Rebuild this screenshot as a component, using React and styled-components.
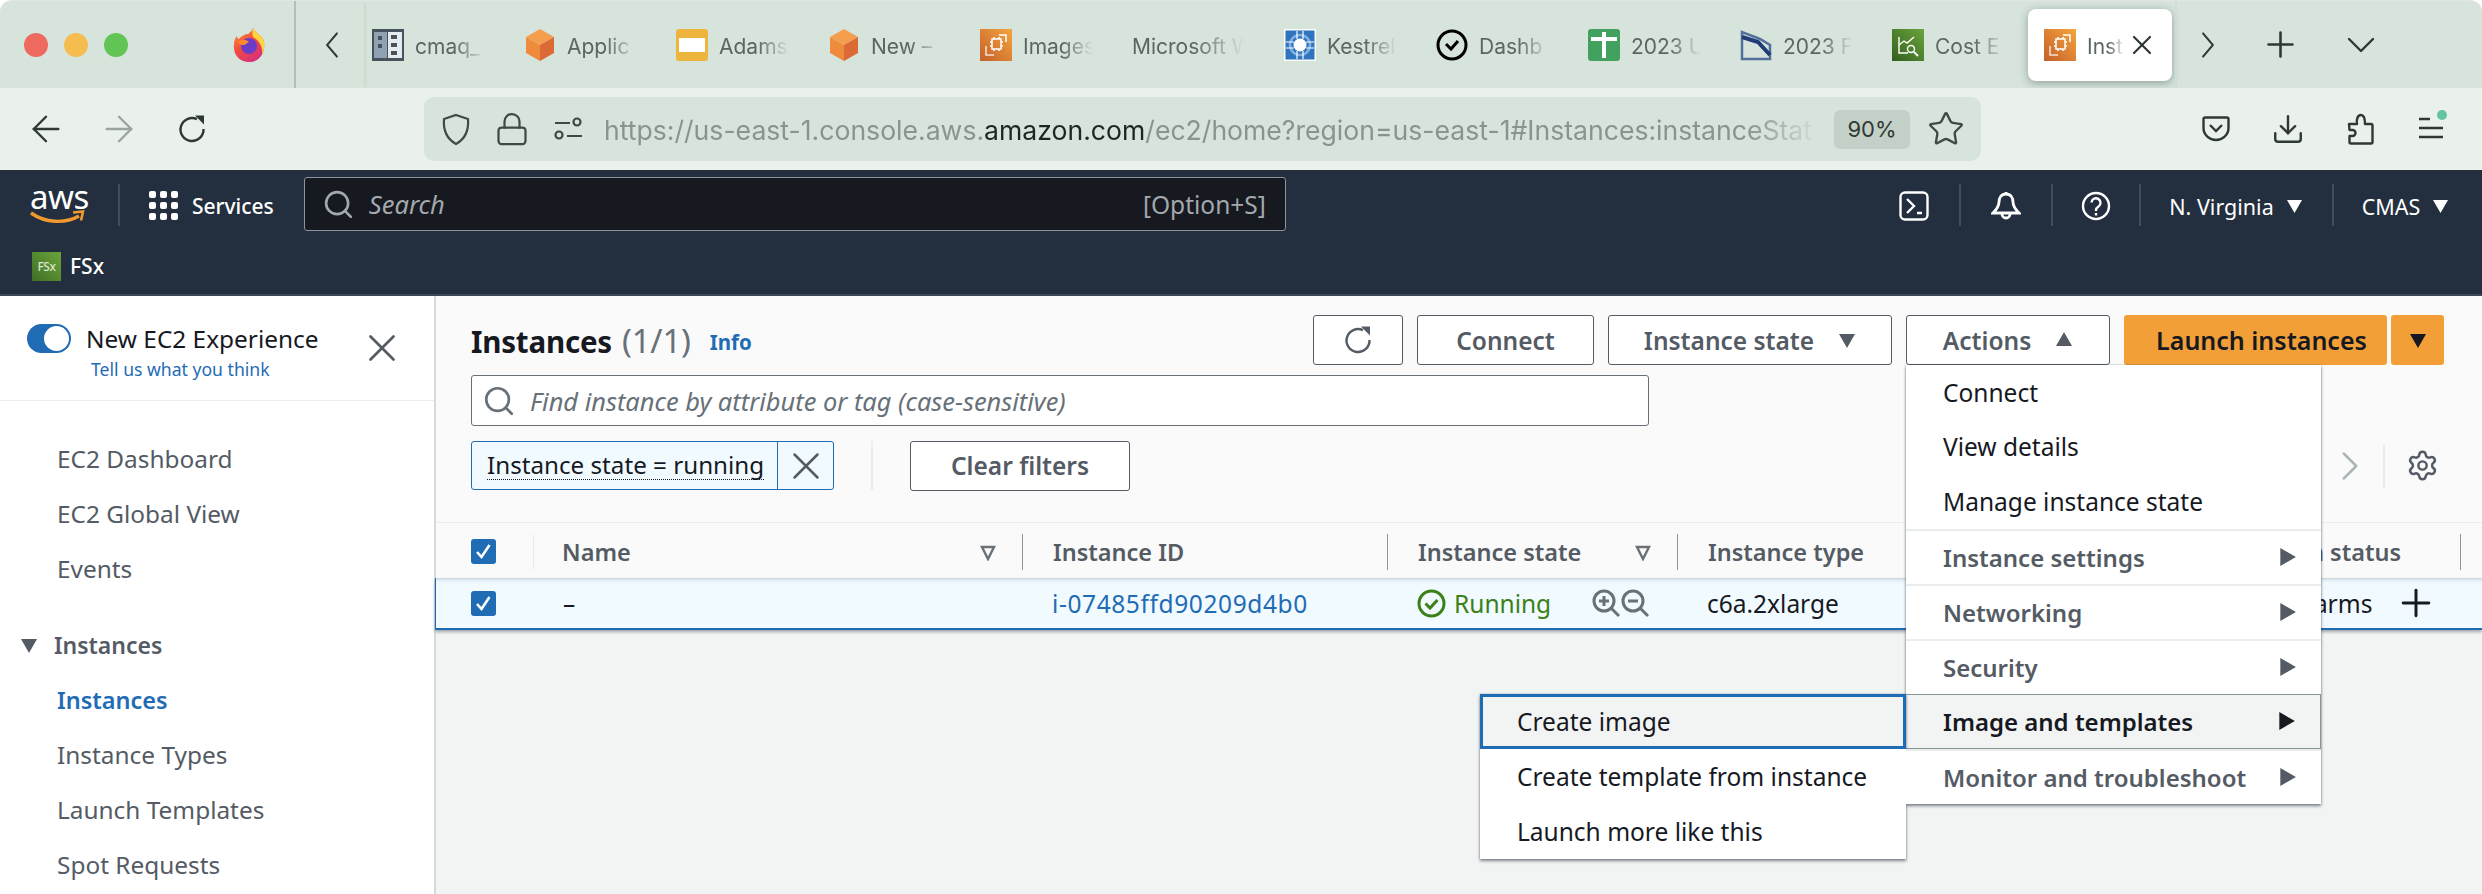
import styled, { createGlobalStyle } from 'styled-components';
import { ArrowLeft, ArrowRight, ChevronDown, ChevronLeft, ChevronRight, Download, Lock, Plus, Search, Settings, Star, X } from 'lucide-react';

const GlobalStyle = createGlobalStyle`
    html, body {
        margin: 0;
        background: #fff;
        font-family: "Noto Sans", "Open Sans", sans-serif;
    }
`;

const columns = '97px 489px 365px 290px 547px 236px 22px';
const blue = '#1f6cb5';

const Window = styled.div`
    width: 2482px;
    height: 894px;
    display: flex;
    flex-direction: column;
    overflow: hidden;
`;

const TabBar = styled.div`
    height: 88px;
    flex: none;
    display: flex;
    align-items: center;
    background: #d6e4db;
    border-radius: 12px 12px 0 0;
    border-top: 1px solid #e2e6e3;
    box-sizing: border-box;
    font-family: Inter, sans-serif;
`;

const Lights = styled.div`
    width: 296px;
    height: 100%;
    flex: none;
    box-sizing: border-box;
    padding: 0 29px 0 24px;
    display: flex;
    align-items: center;
    gap: 16px;
    border-right: 2px solid #b3c0b7;
`;

const Light = styled.span`
    width: 24px;
    height: 24px;
    border-radius: 50%;
    background: ${({ $color }) => $color};
`;

const BackCell = styled.div`
    width: 68px;
    height: 100%;
    flex: none;
    box-sizing: border-box;
    padding-left: 3px;
    display: flex;
    align-items: center;
    justify-content: center;
    color: #2f3833;
    box-shadow: 3px 0 3px -2px #c3d0c7;
`;

const Tab = styled.div`
    flex: none;
    width: 152px;
    box-sizing: border-box;
    padding-left: 8px;
    display: flex;
    align-items: center;
    gap: 11px;
`;

const TabLabel = styled.span`
    width: ${({ $w }) => $w || 70}px;
    padding-top: 4px;
    overflow: hidden;
    white-space: nowrap;
    font-size: 21px;
    color: #5c6660;
    -webkit-mask-image: linear-gradient(to right, #000 55%, transparent 100%);
    mask-image: linear-gradient(to right, #000 55%, transparent 100%);
`;

const ActiveTab = styled.div`
    flex: none;
    width: 144px;
    height: 72px;
    margin-left: -8px;
    box-sizing: border-box;
    padding-left: 16px;
    display: flex;
    align-items: center;
    gap: 11px;
    background: #fff;
    border-radius: 8px;
    box-shadow: 0 2px 8px rgba(60, 80, 70, 0.45);
    color: #2f3833;
`;

const ActiveLabel = styled(TabLabel)`
    width: 38px;
    color: #5c6660;
    flex: none;
`;

const TabTools = styled.div`
    display: flex;
    align-items: center;
    color: #2f3833;
    margin-left: 3px;
    border-left: 2px solid #d0ddd4;
    height: 100%;
`;

const ToolCell = styled.div`
    width: ${({ $w }) => $w}px;
    display: flex;
    justify-content: center;
`;

const ToolBar = styled.div`
    height: 82px;
    flex: none;
    display: flex;
    align-items: center;
    padding: 0 14px 0 9px;
    background: #e9f1ea;
    color: #2f3833;
    font-family: Inter, sans-serif;
`;

const NavButton = styled.div`
    width: 73px;
    display: flex;
    justify-content: center;
    color: ${({ $muted }) => ($muted ? '#9aa59e' : '#2f3833')};
`;

const UrlBar = styled.div`
    width: 1557px;
    height: 64px;
    margin-left: 196px;
    flex: none;
    box-sizing: border-box;
    padding-left: 4px;
    display: flex;
    align-items: center;
    background: #d6e4db;
    border-radius: 10px;
`;

const UrlIcon = styled.div`
    width: 56px;
    flex: none;
    display: flex;
    justify-content: center;
`;

const UrlText = styled.div`
    flex: 1;
    min-width: 0;
    margin-left: 8px;
    padding-top: 2px;
    overflow: hidden;
    white-space: nowrap;
    font-size: 26.6px;
    color: #89948e;
    -webkit-mask-image: linear-gradient(to right, #000 94%, transparent 100%);
    mask-image: linear-gradient(to right, #000 94%, transparent 100%);

    b {
        font-weight: 400;
        color: #1f2522;
    }
`;

const ZoomBadge = styled.div`
    width: 76px;
    height: 39px;
    margin-left: 14px;
    flex: none;
    display: flex;
    align-items: center;
    justify-content: center;
    background: #c3d0c7;
    border-radius: 6px;
    font-size: 22px;
    color: #2f3833;
`;

const StarCell = styled.div`
    width: 71px;
    flex: none;
    display: flex;
    justify-content: center;
`;

const ToolRight = styled.div`
    margin-left: auto;
    display: flex;
    align-items: center;
`;

const ToolIcon = styled.div`
    width: 72px;
    display: flex;
    align-items: center;
    justify-content: center;
`;

const TopNav = styled.div`
    height: 126px;
    flex: none;
    box-sizing: border-box;
    background: #232f3e;
    border-bottom: 2px solid #3b4757;
    color: #fff;
`;

const NavRow = styled.div`
    height: 68px;
    box-sizing: border-box;
    padding: 4px 0 0 30px;
    display: flex;
    align-items: center;
`;

const Logo = styled.div`
    width: 56px;
    height: 44px;
    flex: none;
    margin-top: -4px;
    position: relative;
    font-size: 33px;
    line-height: 30px;
    letter-spacing: -0.5px;
    text-align: center;

    svg {
        position: absolute;
        left: 0;
        bottom: 0;
    }
`;

const NavDivider = styled.span`
    width: 2px;
    height: 42px;
    flex: none;
    background: #414d5c;
    margin-top: -2px;
    margin-left: ${({ $ml }) => $ml || 0}px;
`;

const GridDots = styled.div`
    margin: -2px 0 0 29px;
    display: grid;
    grid-template-columns: repeat(3, 7px);
    grid-auto-rows: 7px;
    gap: 4px;
    flex: none;

    span {
        background: #fff;
        border-radius: 2px;
        width: 7px;
        height: 7px;
    }
`;

const ServicesLabel = styled.span`
    margin-left: 14px;
    font-size: 21px;
    font-weight: 500;
`;

const SearchBox = styled.div`
    width: 982px;
    height: 54px;
    margin: -4px 0 0 30px;
    box-sizing: border-box;
    padding: 0 19px 0 17px;
    flex: none;
    display: flex;
    align-items: center;
    background: #16191f;
    border: 1px solid #8d9399;
    border-radius: 3px;
    color: #a3a8ad;
    font-size: 24.5px;

    i {
        margin-left: 14px;
        font-size: 25.5px;
    }
    span {
        margin-left: auto;
    }
`;

const NavRight = styled.div`
    margin-left: auto;
    display: flex;
    align-items: center;
    height: 100%;
`;

const NavCell = styled.div`
    width: ${({ $w }) => $w}px;
    box-sizing: border-box;
    padding-right: ${({ $pr }) => $pr || 0}px;
    display: flex;
    align-items: center;
    justify-content: center;
    gap: 13px;
    font-size: 21.5px;
`;

const WhiteCaret = styled.svg`
    width: 15px;
    height: 13px;
    fill: currentColor;
`;

const SubRow = styled.div`
    height: 56px;
    display: flex;
    align-items: center;
    padding: 0 0 3px 32px;
    gap: 9px;
    font-size: 21px;
    font-weight: 500;
`;

const FsxIcon = styled.div`
    width: 29px;
    height: 29px;
    display: flex;
    align-items: center;
    justify-content: center;
    background: linear-gradient(45deg, #3f6f25, #6ba43c);
    font-size: 12px;
    letter-spacing: -0.5px;
    color: #d8e6cf;
`;

const Body = styled.div`
    flex: 1;
    min-height: 0;
    display: flex;
`;

const Sidebar = styled.div`
    width: 436px;
    flex: none;
    box-sizing: border-box;
    border-right: 2px solid #d5dbdb;
    background: #fff;
    overflow: hidden;
`;

const Promo = styled.div`
    height: 105px;
    box-sizing: border-box;
    padding: 28px 29px 0 27px;
    display: flex;
    border-bottom: 1px solid #eaeded;
`;

const PromoRow = styled.div`
    display: flex;
    align-items: center;
    gap: 15px;
    font-size: 24.4px;
    line-height: 29px;
    color: #16191f;
`;

const Toggle = styled.span`
    width: 44px;
    height: 29px;
    flex: none;
    box-sizing: border-box;
    display: flex;
    justify-content: flex-end;
    align-items: center;
    padding-right: 2px;
    background: ${blue};
    border-radius: 15px;

    &::after {
        content: '';
        width: 25px;
        height: 25px;
        border-radius: 50%;
        background: #fff;
    }
`;

const PromoLink = styled.div`
    margin: 4px 0 0 64px;
    font-size: 17.6px;
    line-height: 24px;
    color: ${blue};
`;

const PromoClose = styled.div`
    margin-left: auto;
    padding-top: 1px;
    color: #545b64;
`;

const SideList = styled.div`
    padding-top: 30px;
`;

const SideLink = styled.div`
    height: 55px;
    display: flex;
    align-items: center;
    padding-left: 57px;
    font-size: ${({ $active }) => ($active ? 23.5 : 24.4)}px;
    font-weight: ${({ $active }) => ($active ? 600 : 400)};
    color: ${({ $active }) => ($active ? blue : '#545b64')};
`;

const SideSection = styled.div`
    height: 55px;
    margin-top: 21px;
    display: flex;
    align-items: center;
    padding-left: 20px;
    gap: 16px;
    font-size: 23px;
    font-weight: 600;
    color: #545b64;
`;

const Caret = styled.svg`
    width: ${({ $size }) => $size || 18}px;
    height: ${({ $size }) => $size || 18}px;
    flex: none;
    fill: ${({ $color }) => $color || 'currentColor'};
    transform: rotate(${({ $deg }) => $deg || 0}deg);
`;

const Content = styled.div`
    flex: 1;
    min-width: 0;
    background: #f2f3f3;
`;

const Header = styled.div`
    height: 227px;
    box-sizing: border-box;
    padding: 19px 38px 0 35px;
    background: #fafafa;
    border-bottom: 1px solid #eaeded;
`;

const TitleRow = styled.div`
    display: flex;
    align-items: center;
    height: 50px;
`;

const Title = styled.h1`
    margin: 0;
    font-size: 29.5px;
    font-weight: 700;
    color: #16191f;
    letter-spacing: -0.2px;

    span {
        margin-left: 10px;
        font-size: 33px;
        font-weight: 400;
        color: #687078;
    }
`;

const InfoLink = styled.span`
    margin: 4px 0 0 19px;
    font-size: 20.5px;
    font-weight: 700;
    color: ${blue};
`;

const Buttons = styled.div`
    margin-left: auto;
    display: flex;
    align-items: center;
    gap: 14px;
`;

const Button = styled.div`
    width: ${({ $w }) => $w}px;
    height: 50px;
    box-sizing: border-box;
    display: flex;
    align-items: center;
    justify-content: center;
    gap: ${({ $gap }) => $gap || 0}px;
    background: #fff;
    border: 1px solid #545b64;
    border-radius: 3px;
    font-size: 24.5px;
    font-weight: 600;
    color: #545b64;
`;

const ActionsWrap = styled.div`
    position: relative;
`;

const LaunchGroup = styled.div`
    display: flex;
    gap: 4px;
`;

const LaunchButton = styled(Button)`
    background: #f29f38;
    border: none;
    color: #16191f;
    padding-left: ${({ $pl }) => $pl || 0}px;
    font-size: 25px;
`;

const SearchRow = styled.div`
    width: 1178px;
    height: 51px;
    margin-top: 10px;
    box-sizing: border-box;
    padding-left: 10px;
    display: flex;
    align-items: center;
    gap: 14px;
    background: #fff;
    border: 1px solid #687078;
    border-radius: 3px;
    color: #687078;
    font-size: 25.4px;
    font-style: italic;
`;

const FilterRow = styled.div`
    height: 49px;
    margin-top: 15px;
    display: flex;
    align-items: center;
`;

const Token = styled.div`
    width: 363px;
    height: 49px;
    flex: none;
    box-sizing: border-box;
    display: flex;
    background: #f1faff;
    border: 1px solid ${blue};
    border-radius: 3px;
    color: #16191f;
`;

const TokenText = styled.div`
    flex: 1;
    display: flex;
    align-items: center;
    padding-left: 15px;
    font-size: 24.2px;

    span {
        line-height: 28px;
        border-bottom: 1px dotted #16191f;
        white-space: nowrap;
    }
`;

const TokenClose = styled.div`
    width: 55px;
    flex: none;
    display: flex;
    align-items: center;
    justify-content: center;
    border-left: 1px solid ${blue};
    color: #545b64;
`;

const FilterSep = styled.span`
    width: 2px;
    height: 49px;
    margin: 0 37px;
    flex: none;
    background: #eaeded;
`;

const Pager = styled.div`
    margin-left: auto;
    padding-right: 5px;
    display: flex;
    align-items: center;
    color: #aab7b8;
`;

const PagerSep = styled.span`
    width: 2px;
    height: 44px;
    margin: 0 21px 0 8px;
    background: #eaeded;
`;

const GearWrap = styled.span`
    display: flex;
    color: #545b64;
`;

const TableHead = styled.div`
    height: 55px;
    box-sizing: border-box;
    padding-top: 2px;
    display: grid;
    grid-template-columns: ${columns};
    align-items: center;
    background: #fafafa;
`;

const HeadCell = styled.div`
    height: 36px;
    box-sizing: border-box;
    padding: 0 25px 0 ${({ $faint }) => ($faint ? 28 : 30)}px;
    display: flex;
    align-items: center;
    justify-content: space-between;
    border-left: ${({ $faint }) => ($faint ? '1px solid #eaeded' : '1px solid #8d949b')};
    font-size: 23.5px;
    font-weight: 600;
    color: #545b64;
    white-space: nowrap;
`;

const CheckCell = styled.div`
    padding-left: 35px;
    display: flex;
    align-items: center;
`;

const Check = styled.span`
    width: 25px;
    height: 25px;
    display: flex;
    align-items: center;
    justify-content: center;
    background: ${blue};
    border-radius: 3px;
`;

const TableRow = styled.div`
    height: 52px;
    box-sizing: border-box;
    display: grid;
    grid-template-columns: ${columns};
    align-items: center;
    background: #f1faff;
    border-left: 1px solid ${blue};
    border-bottom: 2px solid ${blue};
    margin-left: -1px;
    box-shadow: 0 2px 3px rgba(60, 70, 80, 0.45), inset 0 5px 4px -4px rgba(60, 70, 80, 0.3);
`;

const RowCell = styled.div`
    padding-left: 30px;
    display: flex;
    align-items: center;
    font-size: 24.5px;
    letter-spacing: ${({ $wide }) => ($wide ? '0.6px' : 'normal')};
    color: ${({ $color }) => $color || '#16191f'};
    white-space: nowrap;
`;

const StateText = styled.span`
    margin-left: 8px;
    color: #3b8019;
`;

const ZoomIcons = styled.span`
    margin-left: 41px;
    display: flex;
    color: #687078;
`;

const Menu = styled.div`
    position: absolute;
    top: 100%;
    left: 0;
    z-index: 3;
    width: 415px;
    background: #fff;
    box-shadow: 0 2px 3px rgba(40, 50, 60, 0.55), 0 0 2px rgba(40, 50, 60, 0.3);
`;

const MenuItem = styled.div`
    position: relative;
    height: 54.6px;
    box-sizing: border-box;
    padding: 0 24px 0 37px;
    display: flex;
    align-items: center;
    justify-content: space-between;
    font-size: 24.5px;
    color: #16191f;
    white-space: nowrap;
`;

const MenuGroup = styled(MenuItem)`
    height: 55px;
    font-size: 24px;
    font-weight: 600;
    color: ${({ $open }) => ($open ? '#16191f' : '#545b64')};
    background: ${({ $open }) => ($open ? '#f2f3f3' : '#fff')};
    border-top: ${({ $open }) => ($open ? '1px solid #879596' : '2px solid #eaeded')};
    border-bottom: ${({ $open }) => ($open ? '1px solid #879596' : 'none')};
    border-right: ${({ $open }) => ($open ? '1px solid #879596' : 'none')};
`;

const SubMenu = styled.div`
    position: absolute;
    top: -1px;
    right: 100%;
    width: 426px;
    background: #fff;
    box-shadow: 0 2px 3px rgba(40, 50, 60, 0.55), 0 0 2px rgba(40, 50, 60, 0.3);
    font-weight: 400;
    color: #16191f;
`;

const SubItem = styled(MenuItem)`
    height: 55px;
    background: ${({ $focus }) => ($focus ? '#f2f3f3' : '#fff')};
    border: ${({ $focus }) => ($focus ? `3px solid ${blue}` : 'none')};
    padding-left: ${({ $focus }) => ($focus ? 34 : 37)}px;
`;

// tab favicons
const CubeIcon = () => (
    <svg width="32" height="32" viewBox="0 0 32 32">
        <polygon points="16,0 30,8 16,16 2,8" fill="#f59e4d" />
        <polygon points="2,8 16,16 16,32 2,24" fill="#ef8c3b" />
        <polygon points="30,8 16,16 16,32 30,24" fill="#dc6a34" />
    </svg>
);

const ChipIcon = () => (
    <svg width="32" height="32" viewBox="0 0 32 32">
        <defs>
            <linearGradient id="chipGrad" x1="0" y1="1" x2="1" y2="0">
                <stop offset="0" stopColor="#c5602a" />
                <stop offset="1" stopColor="#f4a53e" />
            </linearGradient>
        </defs>
        <rect width="32" height="32" fill="url(#chipGrad)" />
        <g fill="none" stroke="#fff" strokeWidth="1.5">
            <rect x="12" y="10" width="9" height="10" />
            <path d="M14 8v2M19 8v2M14 20v2M19 20v2M10 13h2M10 17h2M21 13h2M21 17h2" />
            <path d="M19 6h7v7" />
            <path d="M6 17v9h8" opacity="0.8" />
        </g>
    </svg>
);

const TabIcons = {
    cmaq: () => (
        <svg width="32" height="32" viewBox="0 0 32 32">
            <rect width="32" height="32" fill="#47535c" />
            <rect x="2" y="3" width="13" height="26" fill="#8fa2b3" />
            <rect x="16" y="3" width="14" height="26" fill="#e5eaee" />
            <path d="M6 7h4v4H6zM6 15h4v4H6zM19 6h6v4h-6zM19 14h6v4h-6zM19 22h6v4h-6z" fill="#47535c" />
        </svg>
    ),
    cube: CubeIcon,
    slides: () => (
        <svg width="32" height="32" viewBox="0 0 32 32">
            <rect width="32" height="32" rx="3" fill="#edb53e" />
            <rect x="3" y="9" width="26" height="14" fill="#fff" />
        </svg>
    ),
    chip: ChipIcon,
    kestrel: () => (
        <svg width="32" height="32" viewBox="0 0 32 32">
            <rect width="32" height="32" fill="#fff" />
            <rect x="1.5" y="1.5" width="29" height="29" fill="#2f74bf" />
            <circle cx="16" cy="16" r="10" fill="none" stroke="#7fb0e0" strokeWidth="2.5" />
            <circle cx="16" cy="16" r="6.5" fill="#fff" />
            <path d="M2 13h8M2 19h8M22 13h8M22 19h8M13 2v8M19 2v8M13 22v8M19 22v8" stroke="#fff" strokeWidth="1.2" />
        </svg>
    ),
    dash: () => (
        <svg width="32" height="32" viewBox="0 0 32 32">
            <circle cx="16" cy="16" r="14" fill="none" stroke="#000" strokeWidth="3" />
            <path d="M10 15l5 5 7-8" fill="none" stroke="#000" strokeWidth="3" />
        </svg>
    ),
    sheet: () => (
        <svg width="32" height="32" viewBox="0 0 32 32">
            <rect width="32" height="32" rx="3" fill="#43a160" />
            <path d="M3 10h26M16 3v26" stroke="#fff" strokeWidth="4" />
        </svg>
    ),
    report: () => (
        <svg width="32" height="32" viewBox="0 0 32 32">
            <path d="M2 3v27h28V16L20 10z" fill="none" stroke="#54709a" strokeWidth="2.5" />
            <path d="M2 8l16 5 12 13" fill="none" stroke="#1f3c78" strokeWidth="4" />
        </svg>
    ),
    cost: () => (
        <svg width="32" height="32" viewBox="0 0 32 32">
            <defs>
                <linearGradient id="costGrad" x1="0" y1="1" x2="1" y2="0">
                    <stop offset="0" stopColor="#325f1f" />
                    <stop offset="1" stopColor="#6ba43c" />
                </linearGradient>
            </defs>
            <rect width="32" height="32" fill="url(#costGrad)" />
            <g fill="none" stroke="#fff" strokeWidth="1.4">
                <path d="M7 8v16h9" />
                <path d="M7 16l5-4 3 2 7-6" />
                <circle cx="19" cy="20" r="3.5" />
                <path d="M22 23l4 4" strokeWidth="2" />
            </g>
        </svg>
    ),
};

const tabs = [
    { icon: 'cmaq', label: 'cmaq_' },
    { icon: 'cube', label: 'Applic' },
    { icon: 'slides', label: 'Adams' },
    { icon: 'cube', label: 'New –' },
    { icon: 'chip', label: 'Images' },
    { label: 'Microsoft W', width: 112 },
    { icon: 'kestrel', label: 'Kestrel' },
    { icon: 'dash', label: 'Dashb' },
    { icon: 'sheet', label: '2023 U' },
    { icon: 'report', label: '2023 F' },
    { icon: 'cost', label: 'Cost E' },
];

const FirefoxIcon = () => (
    <svg width="32" height="34" viewBox="0 0 32 34" style={{ marginLeft: 'auto' }}>
        <defs>
            <linearGradient id="foxBody" x1="0" y1="0" x2="0.6" y2="1">
                <stop offset="0" stopColor="#ff9a2e" />
                <stop offset="0.55" stopColor="#f2493f" />
                <stop offset="1" stopColor="#d8327a" />
            </linearGradient>
        </defs>
        <path d="M20 0c1 4 7 6 10 11 3 6 1 23-14 23C6 34 0 26 1 17c0-5 2-8 3-9 0 2 1 3 2 3 2-3 6-5 9-5 2-2 4-3 5-6z" fill="url(#foxBody)" />
        <path d="M20 0c1 4 7 6 10 11 2 4 2 10-1 15 1-7-3-14-9-17-1-3-1-6 0-9z" fill="#ffd53d" />
        <circle cx="16" cy="18" r="8" fill="#6a3cc8" />
        <path d="M5 14c3-3 8-3 11 0-3 1-3 3-6 3s-4-1-5-3z" fill="#ff8a2b" />
    </svg>
);

const ReloadIcon = ({ size = 28 }) => (
    <svg width={size} height={size} viewBox="0 0 28 28" fill="none" stroke="currentColor" strokeWidth="2.4">
        <path d="M19 4.2A11.5 11.5 0 1 0 25.5 14" />
        <path d="M17 0.5h9v9z" fill="currentColor" stroke="none" />
    </svg>
);

const ShieldIcon = () => (
    <svg width="30" height="33" viewBox="0 0 30 33" fill="none" stroke="#3f4a44" strokeWidth="2.2">
        <path d="M15 2l12 4c1 12-3 20-12 25C6 26 2 18 3 6z" />
    </svg>
);

const PermIcon = () => (
    <svg width="28" height="24" viewBox="0 0 28 24" fill="none" stroke="#3f4a44" strokeWidth="2.2">
        <path d="M1 6h15M13 19h15" />
        <circle cx="23" cy="5" r="3.5" />
        <circle cx="5" cy="18" r="3.5" />
    </svg>
);

const PocketIcon = () => (
    <svg width="28" height="26" viewBox="0 0 28 26" fill="none" stroke="currentColor" strokeWidth="2.4">
        <path d="M3 1.5h22a1.5 1.5 0 0 1 1.5 1.5v9c0 7-6 12-12.5 12S1.5 19 1.5 12V3A1.5 1.5 0 0 1 3 1.5z" />
        <path d="M8 9l6 6 6-6" />
    </svg>
);

const PuzzleIcon = () => (
    <svg width="27" height="32" viewBox="0 0 27 32" fill="none" stroke="currentColor" strokeWidth="2.4" strokeLinejoin="round">
        <path d="M2 11h8c-1-5 1-9 4-9s4 4 4 9h6a1.5 1.5 0 0 1 1.5 1.5V29a1.5 1.5 0 0 1-1.5 1.5H4A1.5 1.5 0 0 1 2.5 29v-6h3a3 3 0 0 0 0-6h-3z" />
    </svg>
);

const MenuIcon = () => (
    <svg width="38" height="38" viewBox="0 0 38 38" fill="none" stroke="currentColor" strokeWidth="2.6">
        <path d="M6 9h11M6 18h24M6 27h24" />
        <circle cx="29" cy="5" r="5" fill="#63c4a2" stroke="none" />
    </svg>
);

const ArrowTab = ({ dir }) => {
    const Icon = dir === 'left' ? ChevronLeft : ChevronRight;
    return <Icon size={46} strokeWidth={1.2} style={{ transform: 'scaleX(0.85)' }} />;
};

const AwsSmile = () => (
    <svg width="56" height="16" viewBox="0 0 56 16" fill="none">
        <path d="M1 3c14 10 34 11 48 3" stroke="#f0992e" strokeWidth="3.4" />
        <path d="M43 2.5l10-1-2 9" stroke="#f0992e" strokeWidth="2.6" />
    </svg>
);

const TerminalIcon = () => (
    <svg width="30" height="30" viewBox="0 0 30 30" fill="none" stroke="#fff" strokeWidth="2.4">
        <rect x="1.5" y="1.5" width="27" height="27" rx="4.5" />
        <path d="M8 8l7 7-7 7M18 22h5" />
    </svg>
);

const BellIcon = () => (
    <svg width="30" height="32" viewBox="0 0 30 32" fill="none" stroke="#fff" strokeWidth="2.8">
        <path d="M15 2v2M15 4c-5 0-7 4-7 8 0 5-3 8-6 11h26c-3-3-6-6-6-11 0-4-2-8-7-8z" />
        <path d="M11 24a4 4 0 0 0 8 0" />
    </svg>
);

const HelpIcon = () => (
    <svg width="30" height="30" viewBox="0 0 30 30" fill="none" stroke="#fff" strokeWidth="2.4">
        <circle cx="15" cy="15" r="13" />
        <path d="M10.5 11.5a4.5 4.5 0 1 1 7 4c-1.5 1-2.5 2-2.5 3.5v1" />
        <path d="M15 22v2.5" />
    </svg>
);

const Triangle = ({ deg, size, color, outline }) => (
    <Caret viewBox="0 0 18 18" $deg={deg} $size={size} $color={outline ? 'none' : color}>
        <polygon
            points={outline ? '3,4 15,4 9,16' : '1,3 17,3 9,17'}
            stroke={outline ? color : 'none'}
            strokeWidth={outline ? 2.4 : 0}
        />
    </Caret>
);

const CheckMark = () => (
    <Check>
        <svg width="17" height="17" viewBox="0 0 17 17" fill="none" stroke="#fff" strokeWidth="2.6">
            <path d="M2 9l4.5 5L14.5 2" />
        </svg>
    </Check>
);

const RunningIcon = () => (
    <svg width="29" height="29" viewBox="0 0 29 29" fill="none" stroke="#3b8019" strokeWidth="3">
        <circle cx="14.5" cy="14.5" r="12.5" />
        <path d="M8.5 14.5l4.5 4.5 7.5-8" />
    </svg>
);

const MagIcon = ({ plus }) => (
    <svg width="29" height="29" viewBox="0 0 29 29" fill="none" stroke="#687078" strokeWidth="3">
        <circle cx="12" cy="12" r="10" />
        <path d="M19 19l8 8M7 12h10" />
        {plus && <path d="M12 7v10" />}
    </svg>
);

export default function App() {
    return (
        <Window>
            <GlobalStyle />
            <TabBar>
                <Lights>
                    <Light $color="#ee6a5f" />
                    <Light $color="#f5bd4f" />
                    <Light $color="#61c454" />
                    <FirefoxIcon />
                </Lights>
                <BackCell>
                    <ArrowTab dir="left" />
                </BackCell>
                {tabs.map((tab, i) => {
                    const Icon = TabIcons[tab.icon];
                    return (
                        <Tab key={i}>
                            {Icon && <Icon />}
                            <TabLabel $w={tab.width}>{tab.label}</TabLabel>
                        </Tab>
                    );
                })}
                <ActiveTab>
                    <ChipIcon />
                    <ActiveLabel>Inst</ActiveLabel>
                    <X size={32} strokeWidth={1.6} style={{ marginLeft: -10 }} />
                </ActiveTab>
                <TabTools>
                    <ToolCell $w={62}>
                        <ArrowTab dir="right" />
                    </ToolCell>
                    <ToolCell $w={82}>
                        <Plus size={41} strokeWidth={1.5} />
                    </ToolCell>
                    <ToolCell $w={80}>
                        <ChevronDown size={48} strokeWidth={1.2} />
                    </ToolCell>
                </TabTools>
            </TabBar>

            <ToolBar>
                <NavButton>
                    <ArrowLeft size={42} strokeWidth={1.4} />
                </NavButton>
                <NavButton $muted>
                    <ArrowRight size={42} strokeWidth={1.4} />
                </NavButton>
                <NavButton>
                    <ReloadIcon />
                </NavButton>
                <UrlBar>
                    <UrlIcon>
                        <ShieldIcon />
                    </UrlIcon>
                    <UrlIcon>
                        <Lock size={36} strokeWidth={1.5} color="#3f4a44" />
                    </UrlIcon>
                    <UrlIcon>
                        <PermIcon />
                    </UrlIcon>
                    <UrlText>
                        https://us-east-1.console.aws.<b>amazon.com</b>/ec2/home?region=us-east-1#Instances:instanceStat
                    </UrlText>
                    <ZoomBadge>90%</ZoomBadge>
                    <StarCell>
                        <Star size={38} strokeWidth={1.5} color="#3f4a44" />
                    </StarCell>
                </UrlBar>
                <ToolRight>
                    <ToolIcon>
                        <PocketIcon />
                    </ToolIcon>
                    <ToolIcon>
                        <Download size={34} strokeWidth={1.7} />
                    </ToolIcon>
                    <ToolIcon>
                        <PuzzleIcon />
                    </ToolIcon>
                    <ToolIcon>
                        <MenuIcon />
                    </ToolIcon>
                </ToolRight>
            </ToolBar>

            <TopNav>
                <NavRow>
                    <Logo>
                        aws
                        <AwsSmile />
                    </Logo>
                    <NavDivider $ml={32} />
                    <GridDots>
                        {Array.from({ length: 9 }, (_, i) => <span key={i} />)}
                    </GridDots>
                    <ServicesLabel>Services</ServicesLabel>
                    <SearchBox>
                        <Search size={33} strokeWidth={1.9} />
                        <i>Search</i>
                        <span>[Option+S]</span>
                    </SearchBox>
                    <NavRight>
                        <NavCell $w={90}>
                            <TerminalIcon />
                        </NavCell>
                        <NavDivider />
                        <NavCell $w={90}>
                            <BellIcon />
                        </NavCell>
                        <NavDivider />
                        <NavCell $w={86}>
                            <HelpIcon />
                        </NavCell>
                        <NavDivider />
                        <NavCell $w={191} $pr={2}>
                            N. Virginia
                            <WhiteCaret viewBox="0 0 15 13"><polygon points="0,0 15,0 7.5,13" /></WhiteCaret>
                        </NavCell>
                        <NavDivider />
                        <NavCell $w={148} $pr={6}>
                            CMAS
                            <WhiteCaret viewBox="0 0 15 13"><polygon points="0,0 15,0 7.5,13" /></WhiteCaret>
                        </NavCell>
                    </NavRight>
                </NavRow>
                <SubRow>
                    <FsxIcon>FSx</FsxIcon>
                    FSx
                </SubRow>
            </TopNav>

            <Body>
                <Sidebar>
                    <Promo>
                        <div>
                            <PromoRow>
                                <Toggle />
                                New EC2 Experience
                            </PromoRow>
                            <PromoLink>Tell us what you think</PromoLink>
                        </div>
                        <PromoClose>
                            <X size={46} strokeWidth={1.4} />
                        </PromoClose>
                    </Promo>
                    <SideList>
                        <SideLink>EC2 Dashboard</SideLink>
                        <SideLink>EC2 Global View</SideLink>
                        <SideLink>Events</SideLink>
                        <SideSection>
                            <Triangle color="#545b64" />
                            Instances
                        </SideSection>
                        <SideLink $active>Instances</SideLink>
                        <SideLink>Instance Types</SideLink>
                        <SideLink>Launch Templates</SideLink>
                        <SideLink>Spot Requests</SideLink>
                    </SideList>
                </Sidebar>

                <Content>
                    <Header>
                        <TitleRow>
                            <Title>
                                Instances<span>(1/1)</span>
                            </Title>
                            <InfoLink>Info</InfoLink>
                            <Buttons>
                                <Button $w={90}>
                                    <ReloadIcon />
                                </Button>
                                <Button $w={177}>Connect</Button>
                                <Button $w={284} $gap={24}>
                                    Instance state
                                    <Triangle color="#545b64" />
                                </Button>
                                <ActionsWrap>
                                    <Button $w={204} $gap={24}>
                                        Actions
                                        <Triangle color="#545b64" deg={180} />
                                    </Button>
                                    <Menu>
                                        <MenuItem>Connect</MenuItem>
                                        <MenuItem>View details</MenuItem>
                                        <MenuItem>Manage instance state</MenuItem>
                                        <MenuGroup>
                                            Instance settings
                                            <Triangle color="#545b64" deg={-90} size={20} />
                                        </MenuGroup>
                                        <MenuGroup>
                                            Networking
                                            <Triangle color="#545b64" deg={-90} size={20} />
                                        </MenuGroup>
                                        <MenuGroup>
                                            Security
                                            <Triangle color="#545b64" deg={-90} size={20} />
                                        </MenuGroup>
                                        <MenuGroup $open>
                                            Image and templates
                                            <Triangle color="#16191f" deg={-90} size={20} />
                                            <SubMenu>
                                                <SubItem $focus>Create image</SubItem>
                                                <SubItem>Create template from instance</SubItem>
                                                <SubItem>Launch more like this</SubItem>
                                            </SubMenu>
                                        </MenuGroup>
                                        <MenuGroup>
                                            Monitor and troubleshoot
                                            <Triangle color="#545b64" deg={-90} size={20} />
                                        </MenuGroup>
                                    </Menu>
                                </ActionsWrap>
                                <LaunchGroup>
                                    <LaunchButton $w={263} $pl={12}>Launch instances</LaunchButton>
                                    <LaunchButton $w={53}>
                                        <Triangle color="#16191f" />
                                    </LaunchButton>
                                </LaunchGroup>
                            </Buttons>
                        </TitleRow>
                        <SearchRow>
                            <Search size={34} strokeWidth={1.9} />
                            Find instance by attribute or tag (case-sensitive)
                        </SearchRow>
                        <FilterRow>
                            <Token>
                                <TokenText>
                                    <span>Instance state = running</span>
                                </TokenText>
                                <TokenClose>
                                    <X size={46} strokeWidth={1.3} />
                                </TokenClose>
                            </Token>
                            <FilterSep />
                            <Button $w={220}>Clear filters</Button>
                            <Pager>
                                <ChevronRight size={50} strokeWidth={1.2} />
                                <PagerSep />
                                <GearWrap>
                                    <Settings size={33} strokeWidth={1.8} />
                                </GearWrap>
                            </Pager>
                        </FilterRow>
                    </Header>
                    <TableHead>
                        <CheckCell>
                            <CheckMark />
                        </CheckCell>
                        <HeadCell $faint>
                            Name
                            <Triangle outline color="#687078" />
                        </HeadCell>
                        <HeadCell>Instance ID</HeadCell>
                        <HeadCell>
                            Instance state
                            <Triangle outline color="#687078" />
                        </HeadCell>
                        <HeadCell>Instance type</HeadCell>
                        <HeadCell>Alarm status</HeadCell>
                        <HeadCell />
                    </TableHead>
                    <TableRow>
                        <CheckCell>
                            <CheckMark />
                        </CheckCell>
                        <RowCell>–</RowCell>
                        <RowCell $color={blue} $wide>i-07485ffd90209d4b0</RowCell>
                        <RowCell>
                            <RunningIcon />
                            <StateText>Running</StateText>
                            <ZoomIcons>
                                <MagIcon plus />
                                <MagIcon />
                            </ZoomIcons>
                        </RowCell>
                        <RowCell>c6a.2xlarge</RowCell>
                        <RowCell>
                            No alarms
                            <Plus size={44} strokeWidth={1.6} style={{ marginLeft: 22 }} />
                        </RowCell>
                    </TableRow>
                </Content>
            </Body>
        </Window>
    );
}
